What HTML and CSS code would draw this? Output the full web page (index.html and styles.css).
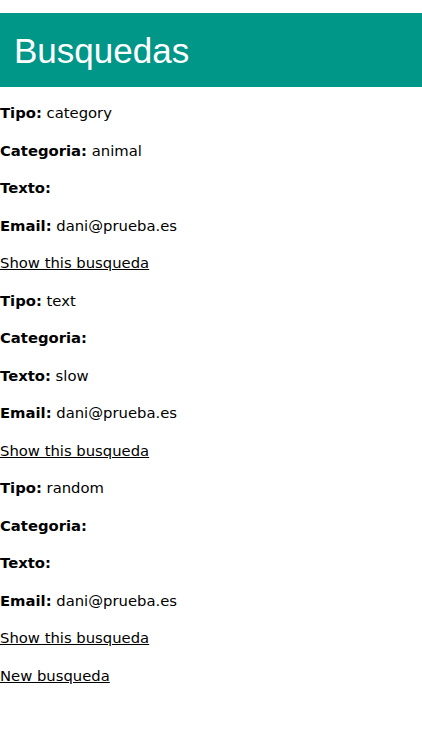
FILE: index.html
```html
<!DOCTYPE html>
<html lang="es">
<head>
<meta charset="utf-8">
<title>Busquedas</title>
<link rel="stylesheet" href="styles.css">
</head>
<body>
<header class="topbar"><h1 class="title">Busquedas</h1></header>
<main class="list">
  <div class="item">
    <p><strong>Tipo:</strong> category</p>
    <p><strong>Categoria:</strong> animal</p>
    <p><strong>Texto:</strong> </p>
    <p><strong>Email:</strong> dani@prueba.es</p>
  </div>
  <p><a href="#">Show this busqueda</a></p>
  <div class="item">
    <p><strong>Tipo:</strong> text</p>
    <p><strong>Categoria:</strong> </p>
    <p><strong>Texto:</strong> slow</p>
    <p><strong>Email:</strong> dani@prueba.es</p>
  </div>
  <p><a href="#">Show this busqueda</a></p>
  <div class="item">
    <p><strong>Tipo:</strong> random</p>
    <p><strong>Categoria:</strong> </p>
    <p><strong>Texto:</strong> </p>
    <p><strong>Email:</strong> dani@prueba.es</p>
  </div>
  <p><a href="#">Show this busqueda</a></p>
</main>
<p><a href="#">New busqueda</a></p>
</body>
</html>
```
FILE: styles.css
```css
html, body {
  margin: 0;
  padding: 0;
  background: #fff;
}
body {
  font-family: "DejaVu Sans", sans-serif;
  font-size: 14.8px;
  line-height: 22.5px;
  color: #000;
}
.topbar {
  margin-top: 13px;
  height: 74px;
  background: #009688;
  display: flex;
  align-items: center;
  padding: 0 14px;
}
.title {
  margin: 0;
  font-family: "Liberation Sans", Arial, sans-serif;
  font-weight: normal;
  font-size: 35px;
  line-height: 1;
  color: #fff;
}
p {
  margin: 15px 0;
}
a {
  color: #000;
  text-decoration: underline;
}
strong {
  font-weight: bold;
}
```
